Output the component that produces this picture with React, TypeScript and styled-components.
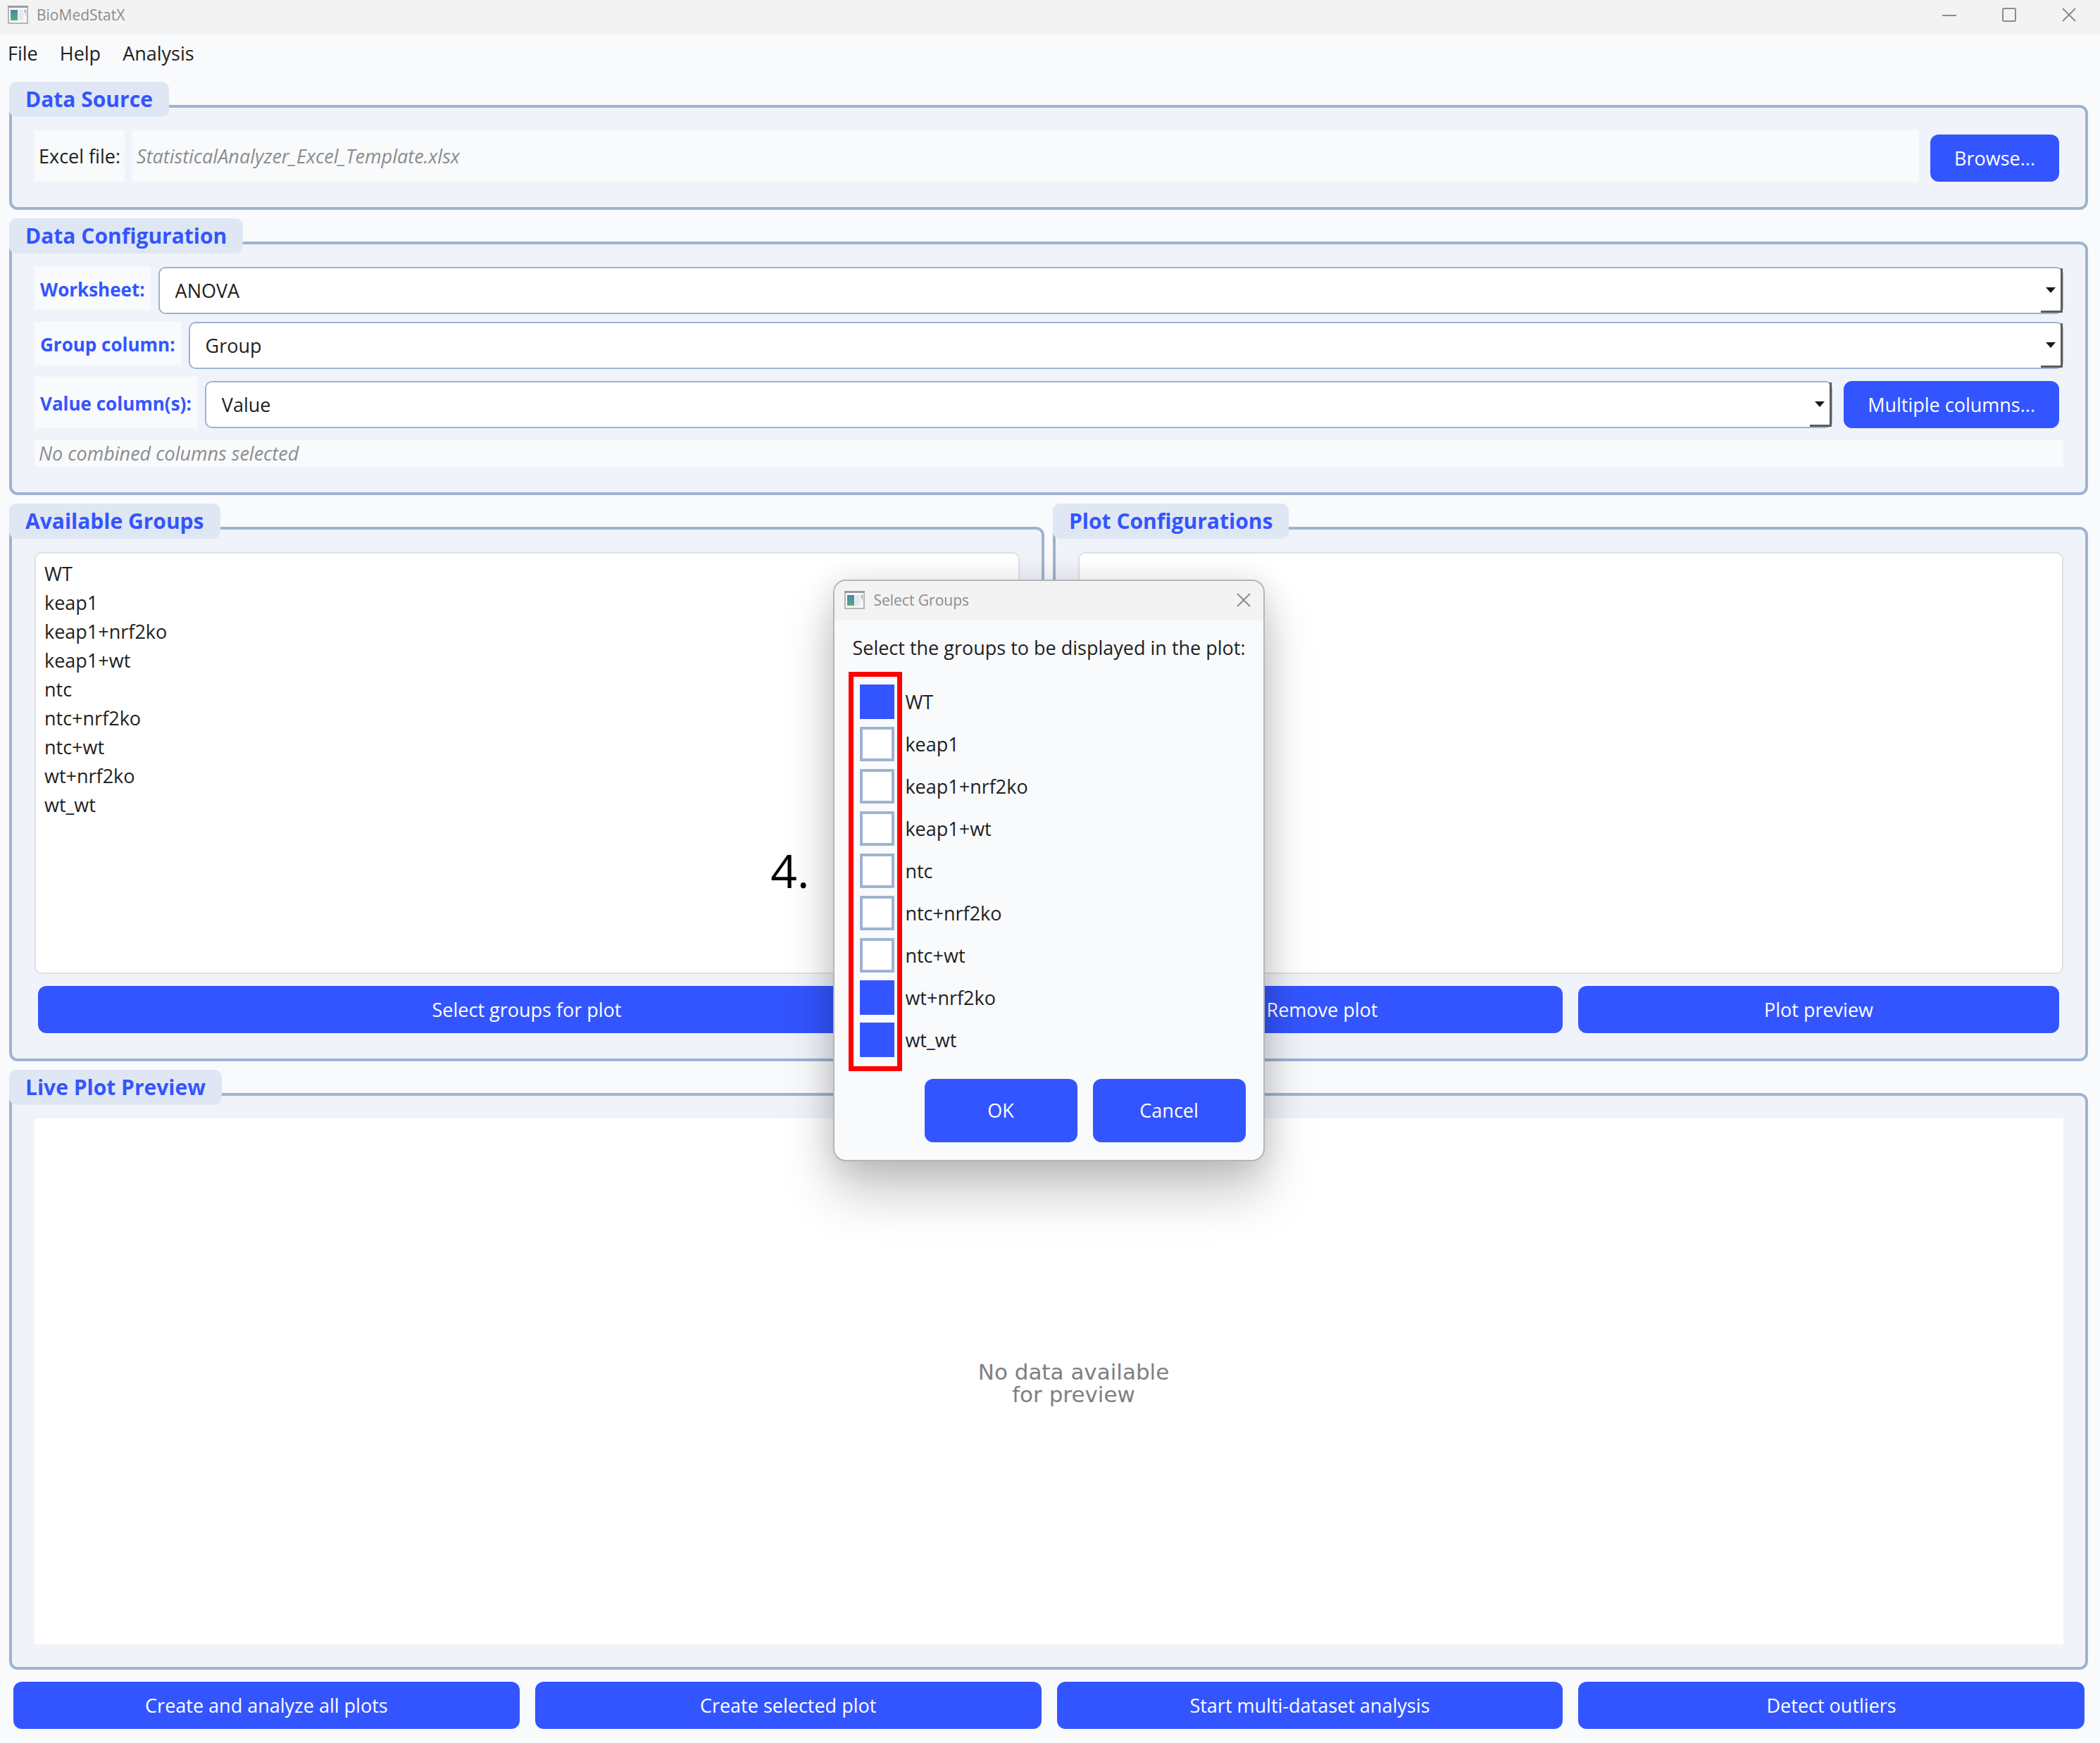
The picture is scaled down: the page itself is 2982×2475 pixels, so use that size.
import React, { useState } from "react";
import styled, { createGlobalStyle } from "styled-components";

const c = {
  blue: "#3355ff",
  line: "#9fb3d1",
  page: "#f8fafc",
  panel: "#f0f3fa",
  tab: "#e0e7f4",
  text: "#212121",
  muted: "#8c8c8c",
  chrome: "#f3f3f3",
};

const GlobalStyle = createGlobalStyle`
  *, *::before, *::after { box-sizing: border-box; }
  body {
    margin: 0;
    background: ${c.page};
    color: ${c.text};
    font-family: "Open Sans", "Noto Sans", sans-serif;
    font-size: 27px;
    line-height: 38px;
  }
  button, select, input { font: inherit; }
`;

const Window = styled.div`
  position: relative;
  display: flex;
  flex-direction: column;
  min-height: 100vh;
`;

const TitleBar = styled.header<{ $tall?: boolean }>`
  display: flex;
  align-items: center;
  height: ${(p) => (p.$tall ? 56 : 50)}px;
  padding: ${(p) => (p.$tall ? "0 18px 2px 14px" : "0 34px 8px 11px")};
  background: ${c.chrome};
  color: ${c.muted};
`;

const TitleText = styled.h1`
  flex: 1;
  margin: 0 0 0 12px;
  font-size: 21px;
  line-height: 30px;
  font-weight: 400;
`;

const WindowControls = styled.div`
  display: flex;
  gap: 65px;
`;

const IconButton = styled.button`
  display: flex;
  padding: 0;
  border: 0;
  background: none;
  color: ${c.muted};
`;

const MenuBar = styled.nav`
  display: flex;
  gap: 31px;
  height: 66px;
  padding: 7px 11px;
`;

const MenuItem = styled.a`
  color: ${c.text};
  text-decoration: none;
`;

const Content = styled.main`
  flex: 1;
  display: flex;
  flex-direction: column;
  gap: 12px;
  padding: 0 17px 20px 13px;
`;

const Columns = styled.div`
  display: grid;
  grid-template-columns: 1fr 1fr;
  gap: 12px;
`;

const GroupBox = styled.section<{ $grow?: boolean }>`
  display: flex;
  flex-direction: column;
  align-items: stretch;
  flex: ${(p) => (p.$grow ? "1" : "none")};
`;

const GroupTitle = styled.h2`
  z-index: 1;
  align-self: flex-start;
  height: 50px;
  margin: 0 0 -17px;
  padding: 0 23px;
  border-radius: 10px;
  background: ${c.tab};
  color: ${c.blue};
  font-size: 30px;
  line-height: 50px;
  font-weight: 700;
`;

const GroupBody = styled.div<{ $canvas?: boolean }>`
  flex: 1;
  display: flex;
  flex-direction: column;
  gap: 11px;
  padding: 32px 31px ${(p) => (p.$canvas ? 32 : 36)}px 32px;
  border: 4px solid ${c.line};
  border-radius: 12px;
  background: ${c.panel};
`;

const Row = styled.div<{ $last?: boolean }>`
  display: flex;
  gap: 11px;
  margin-bottom: ${(p) => (p.$last ? 6 : 0)}px;
`;

const PlainCell = styled.span<{ $grow?: boolean; $hint?: boolean }>`
  flex: ${(p) => (p.$grow ? "1" : "none")};
  display: flex;
  align-items: center;
  padding: 0 6px;
  background: ${c.page};
  color: ${(p) => (p.$hint ? c.muted : c.text)};
  font-style: ${(p) => (p.$hint ? "italic" : "normal")};
`;

const FieldLabel = styled.label<{ $short?: boolean }>`
  display: flex;
  align-items: center;
  margin-bottom: ${(p) => (p.$short ? 6 : 0)}px;
  padding: 3px 8px 0;
  background: ${c.page};
  color: ${c.blue};
  font-size: 26px;
  font-weight: 700;
`;

const Button = styled.button<{ $fit?: boolean }>`
  flex: ${(p) => (p.$fit ? "none" : "1 1 0")};
  height: 67px;
  padding: 0 34px;
  border: 0;
  border-radius: 12px;
  background: ${c.blue};
  color: #fff;
  font-size: 27px;
  font-weight: 500;
`;

const ButtonSlot = styled.div`
  flex: none;
  display: flex;
  padding: 6px 6px 0 5px;
`;

const SelectFrame = styled.div<{ $lower?: boolean }>`
  position: relative;
  flex: 1;
  display: flex;
  margin-top: ${(p) => (p.$lower ? 6 : 0)}px;

  &::before {
    content: "";
    position: absolute;
    top: 2px;
    right: 1px;
    bottom: 2px;
    width: 31px;
    border: solid #5c5c5c;
    border-width: 0 3px 3px 0;
    pointer-events: none;
  }

  &::after {
    content: "";
    position: absolute;
    top: 29px;
    right: 11px;
    border: solid transparent;
    border-width: 8px 7px 0;
    border-top-color: #1a1a1a;
    pointer-events: none;
  }
`;

const Select = styled.select`
  appearance: none;
  width: 100%;
  height: 67px;
  padding: 0 40px 0 22px;
  border: 2px solid ${c.line};
  border-radius: 10px;
  background: #fff;
  color: ${c.text};
`;

const ListBox = styled.ul`
  height: 599px;
  margin: 0;
  padding: 8px 12px;
  border: 2px solid #dfe0e3;
  border-radius: 10px;
  background: #fff;
  list-style: none;
`;

const ListItem = styled.li`
  line-height: 41px;
`;

const Actions = styled.div`
  display: flex;
  gap: 22px;
  padding: 6px 6px 0 5px;
`;

const FooterActions = styled.footer`
  display: flex;
  gap: 22px;
  padding: 5px 5px 0 6px;
`;

const Canvas = styled.div`
  flex: 1;
  display: grid;
  place-items: center;
  padding: 4px 0 0 70px;
  background: #fff;
  color: #808080;
  font-family: "DejaVu Sans", sans-serif;
  font-size: 31px;
  line-height: 32px;
  text-align: center;
`;

const Overlay = styled.div`
  position: absolute;
  inset: 0;
  z-index: 2;
  display: grid;
  place-items: center;
  padding: 0 3px 3px 0;
`;

const Dialog = styled.div`
  position: relative;
  border: 2px solid #b4b6b8;
  border-radius: 18px;
  background: ${c.page};
  box-shadow: 0 44px 72px rgba(0, 0, 0, 0.22), 0 4px 44px rgba(0, 0, 0, 0.12);

  & > header {
    border-radius: 16px 16px 0 0;
  }
`;

const DialogBody = styled.div`
  padding: 20px 25px 25px;
`;

const Prompt = styled.p`
  margin: 0 0 33px;
`;

const CheckList = styled.div`
  position: relative;
  display: grid;
  justify-items: start;
  gap: 11px;
  padding-left: 11px;
`;

const Highlight = styled.div`
  position: absolute;
  top: -18px;
  bottom: -20px;
  left: -5px;
  width: 76px;
  border: 7px solid #ff0000;
  pointer-events: none;
`;

const StepNumber = styled.span`
  position: absolute;
  top: 365px;
  right: calc(100% + 36px);
  color: #000;
  font-size: 66px;
  line-height: 90px;
`;

const CheckLabel = styled.label`
  display: flex;
  align-items: center;
  gap: 15px;
`;

const CheckBox = styled.input`
  appearance: none;
  width: 49px;
  height: 49px;
  margin: 0;
  border: 4px solid ${c.line};
  background: #fff;

  &:checked {
    border-color: ${c.blue};
    background: ${c.blue};
  }
`;

const DialogActions = styled.div`
  display: flex;
  justify-content: flex-end;
  gap: 22px;
  margin-top: 31px;
`;

const DialogButton = styled(Button)`
  flex: none;
  width: 217px;
  height: 90px;
`;

const AppIcon = () => (
  <svg width="29" height="26" viewBox="0 0 29 26" aria-hidden="true">
    <defs>
      <linearGradient id="screen" x1="0" y1="0" x2="0" y2="1">
        <stop offset="0" stopColor="#4c83ad" />
        <stop offset="1" stopColor="#55ad7c" />
      </linearGradient>
      <linearGradient id="strip" x1="0" y1="0" x2="0" y2="1">
        <stop offset="0" stopColor="#8fb4d6" />
        <stop offset="1" stopColor="#8fd0a6" />
      </linearGradient>
    </defs>
    <rect x="1" y="1" width="27" height="24" fill="#f7f8f9" stroke="#b3b7bc" strokeWidth="2" />
    <rect x="0" y="0" width="29" height="3" fill="#979da4" />
    <rect x="4" y="6" width="10" height="15" fill="url(#screen)" />
    <rect x="15" y="6" width="7" height="15" fill="#e6e8ea" />
    <path d="M23 6h3v9z" fill="url(#strip)" />
  </svg>
);

const CloseIcon = () => (
  <svg width="20" height="20" viewBox="0 0 20 20" fill="none" stroke="currentColor" strokeWidth="2" aria-hidden="true">
    <path d="M1 1l18 18M19 1L1 19" />
  </svg>
);

const groups = ["WT", "keap1", "keap1+nrf2ko", "keap1+wt", "ntc", "ntc+nrf2ko", "ntc+wt", "wt+nrf2ko", "wt_wt"];

type FieldProps = { id: string; label: string; value: string; action?: string };

const Field = ({ id, label, value, action }: FieldProps) => (
  <Row $last={!!action}>
    <FieldLabel htmlFor={id} $short={!action}>{label}</FieldLabel>
    <SelectFrame $lower={!!action}>
      <Select id={id} defaultValue={value}>
        <option>{value}</option>
      </Select>
    </SelectFrame>
    {action && (
      <ButtonSlot>
        <Button $fit type="button">{action}</Button>
      </ButtonSlot>
    )}
  </Row>
);

export default function App() {
  const [selected, setSelected] = useState(["WT", "wt+nrf2ko", "wt_wt"]);
  const toggle = (name: string) =>
    setSelected((s) => (s.includes(name) ? s.filter((n) => n !== name) : [...s, name]));

  return (
    <Window>
      <GlobalStyle />
      <TitleBar>
        <AppIcon />
        <TitleText>BioMedStatX</TitleText>
        <WindowControls>
          <IconButton aria-label="Minimize">
            <svg width="20" height="20" viewBox="0 0 20 20" fill="none" stroke="currentColor" strokeWidth="2">
              <path d="M0 11h20" />
            </svg>
          </IconButton>
          <IconButton aria-label="Maximize">
            <svg width="20" height="20" viewBox="0 0 20 20" fill="none" stroke="currentColor" strokeWidth="2">
              <rect x="1" y="1" width="18" height="18" rx="2" />
            </svg>
          </IconButton>
          <IconButton aria-label="Close">
            <CloseIcon />
          </IconButton>
        </WindowControls>
      </TitleBar>
      <MenuBar>
        <MenuItem href="#file">File</MenuItem>
        <MenuItem href="#help">Help</MenuItem>
        <MenuItem href="#analysis">Analysis</MenuItem>
      </MenuBar>
      <Content>
        <GroupBox>
          <GroupTitle>Data Source</GroupTitle>
          <GroupBody>
            <Row>
              <PlainCell>Excel file:</PlainCell>
              <PlainCell $grow $hint>StatisticalAnalyzer_Excel_Template.xlsx</PlainCell>
              <ButtonSlot>
                <Button $fit type="button">Browse...</Button>
              </ButtonSlot>
            </Row>
          </GroupBody>
        </GroupBox>

        <GroupBox>
          <GroupTitle>Data Configuration</GroupTitle>
          <GroupBody>
            <Field id="worksheet" label="Worksheet:" value="ANOVA" />
            <Field id="group-column" label="Group column:" value="Group" />
            <Field id="value-column" label="Value column(s):" value="Value" action="Multiple columns..." />
            <PlainCell $hint>No combined columns selected</PlainCell>
          </GroupBody>
        </GroupBox>

        <Columns>
          <GroupBox>
            <GroupTitle>Available Groups</GroupTitle>
            <GroupBody>
              <ListBox>
                {groups.map((g) => (
                  <ListItem key={g}>{g}</ListItem>
                ))}
              </ListBox>
              <Actions>
                <Button type="button">Select groups for plot</Button>
              </Actions>
            </GroupBody>
          </GroupBox>
          <GroupBox>
            <GroupTitle>Plot Configurations</GroupTitle>
            <GroupBody>
              <ListBox />
              <Actions>
                <Button type="button">Remove plot</Button>
                <Button type="button">Plot preview</Button>
              </Actions>
            </GroupBody>
          </GroupBox>
        </Columns>

        <GroupBox $grow>
          <GroupTitle>Live Plot Preview</GroupTitle>
          <GroupBody $canvas>
            <Canvas>
              <span>
                No data available
                <br />
                for preview
              </span>
            </Canvas>
          </GroupBody>
        </GroupBox>

        <FooterActions>
          <Button type="button">Create and analyze all plots</Button>
          <Button type="button">Create selected plot</Button>
          <Button type="button">Start multi-dataset analysis</Button>
          <Button type="button">Detect outliers</Button>
        </FooterActions>
      </Content>

      <Overlay>
        <Dialog role="dialog" aria-labelledby="dialog-title">
          <TitleBar $tall>
            <AppIcon />
            <TitleText as="h2" id="dialog-title">Select Groups</TitleText>
            <IconButton aria-label="Close dialog">
              <CloseIcon />
            </IconButton>
          </TitleBar>
          <DialogBody>
            <Prompt>Select the groups to be displayed in the plot:</Prompt>
            <CheckList>
              {groups.map((g) => (
                <CheckLabel key={g}>
                  <CheckBox type="checkbox" checked={selected.includes(g)} onChange={() => toggle(g)} />
                  {g}
                </CheckLabel>
              ))}
              <Highlight />
            </CheckList>
            <DialogActions>
              <DialogButton type="button">OK</DialogButton>
              <DialogButton type="button">Cancel</DialogButton>
            </DialogActions>
          </DialogBody>
          <StepNumber>4.</StepNumber>
        </Dialog>
      </Overlay>
    </Window>
  );
}
